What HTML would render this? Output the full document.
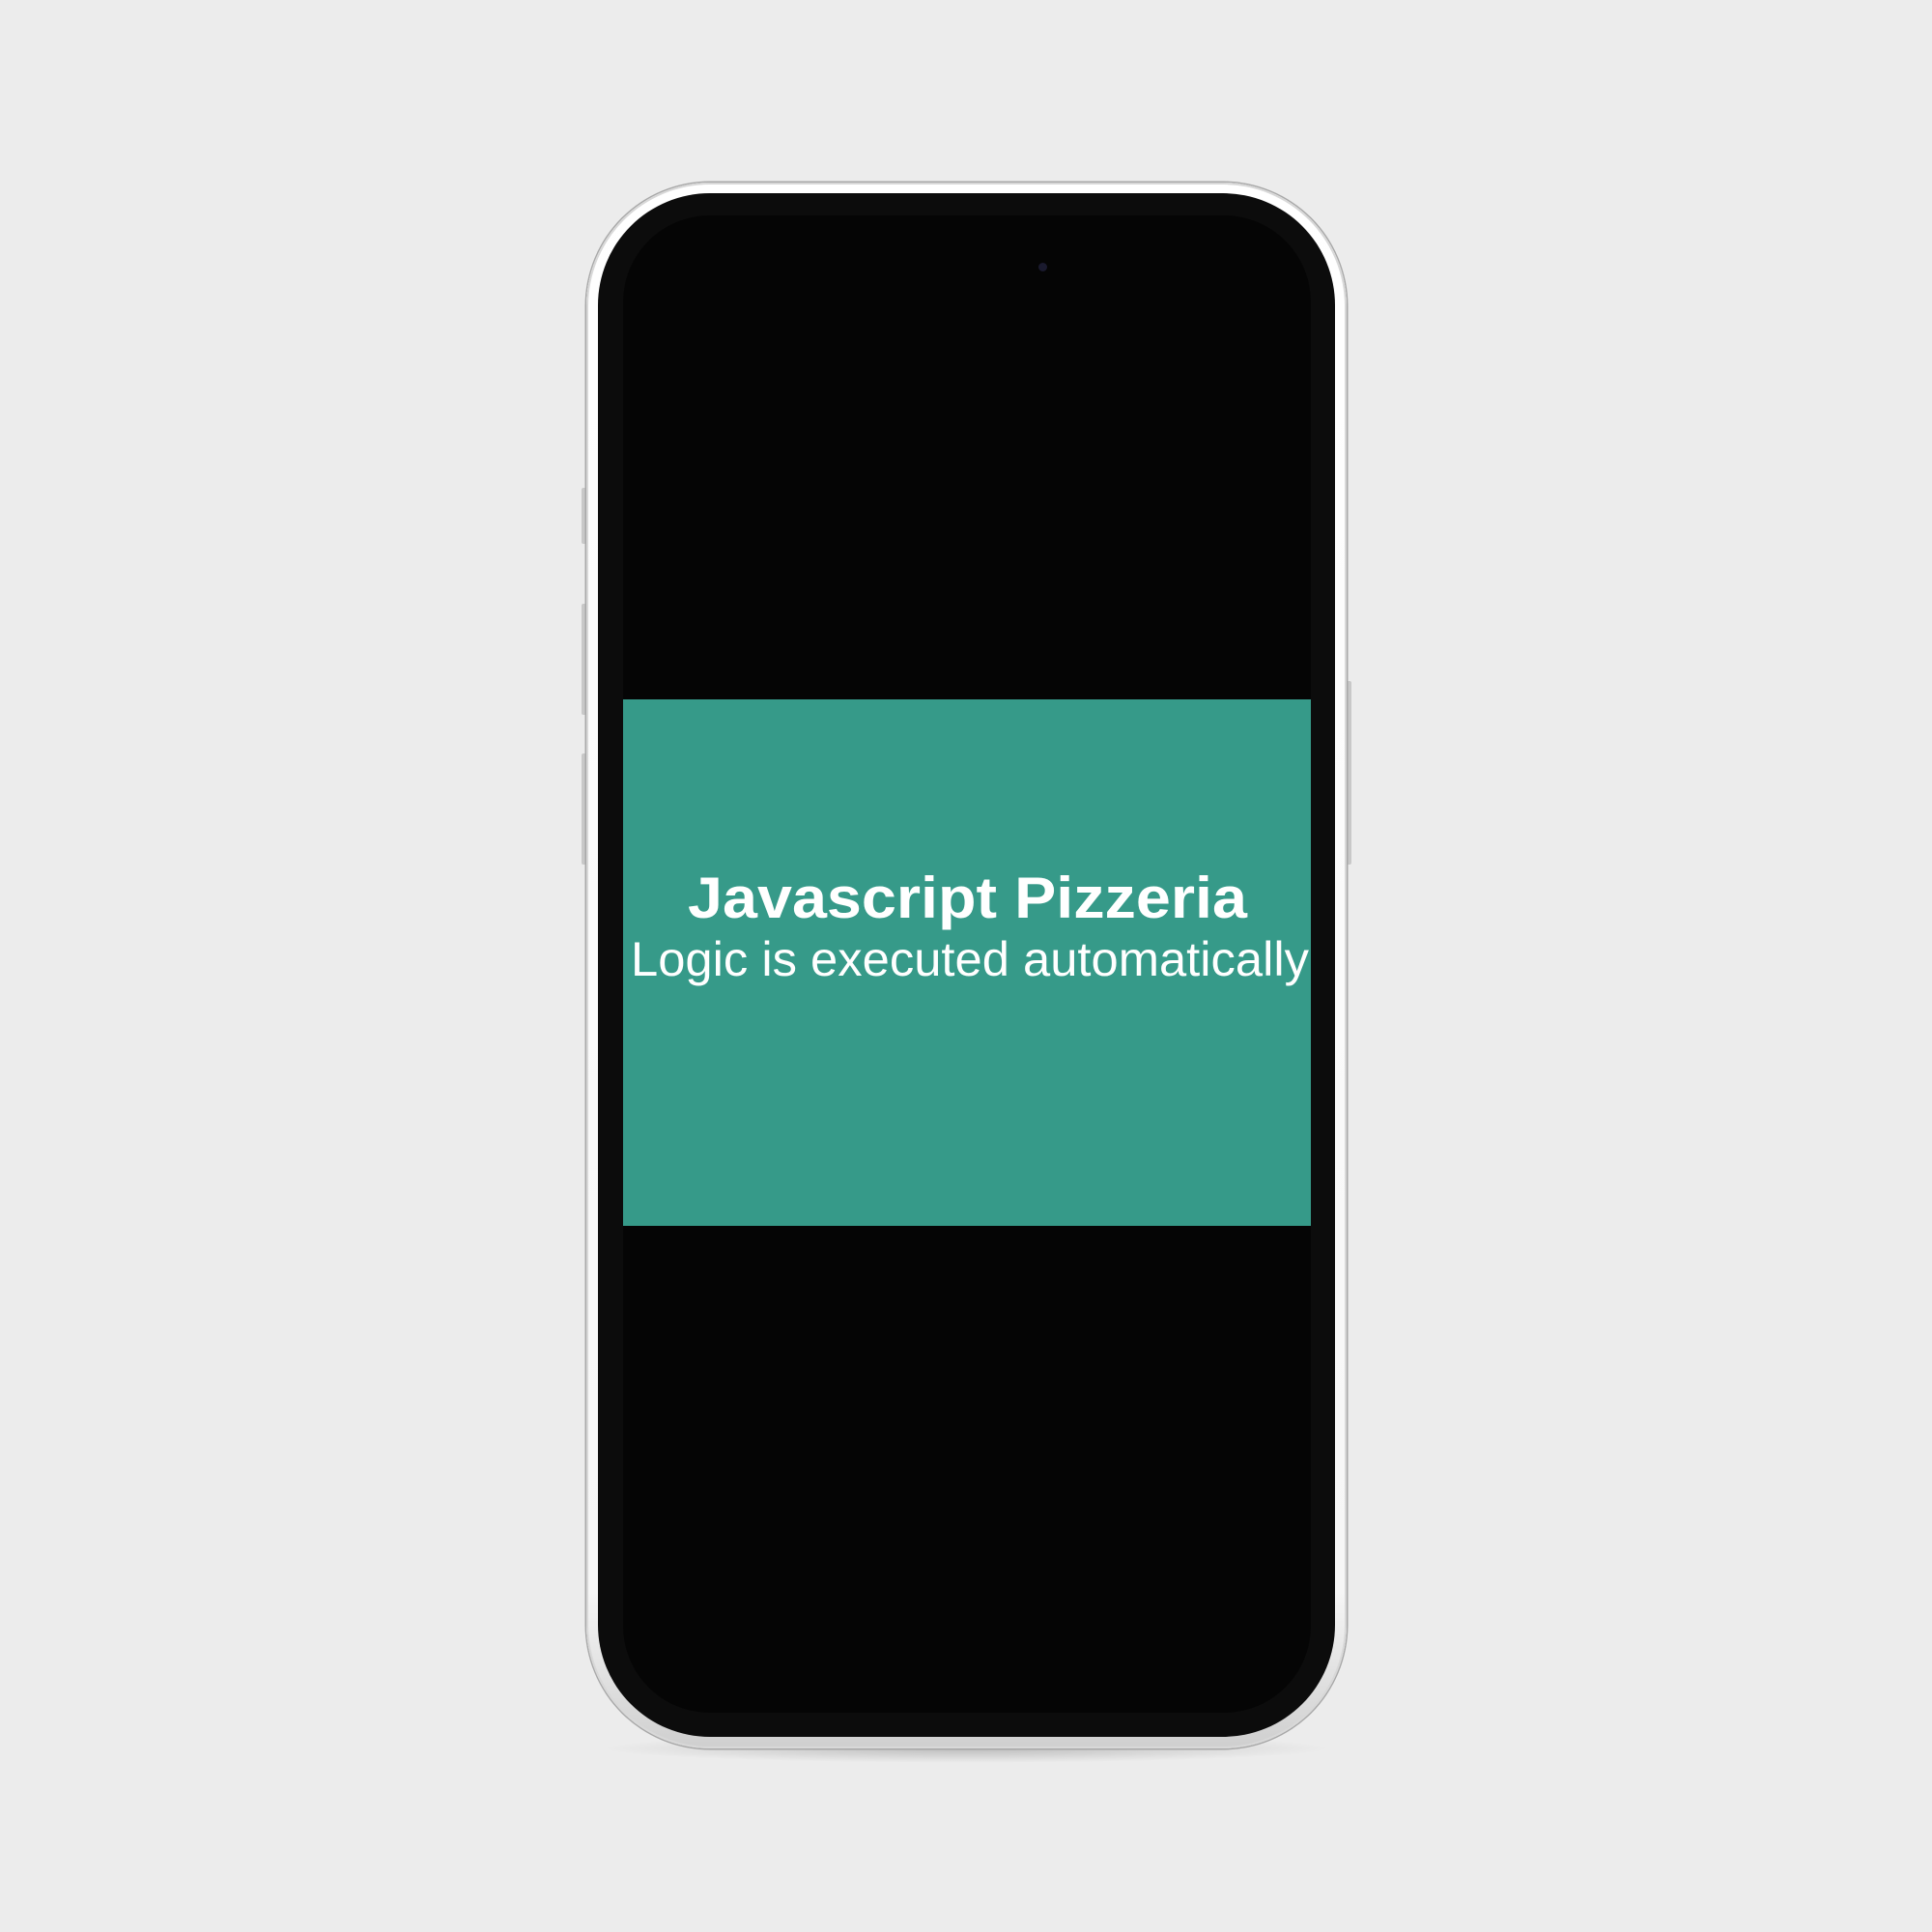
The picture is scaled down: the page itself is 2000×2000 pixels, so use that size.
<!DOCTYPE html>
<html><head><meta charset="utf-8"><style>
html,body{margin:0;padding:0;}
body{width:2000px;height:2000px;background:#ececec;position:relative;overflow:hidden;}
.shadow{position:absolute;left:620px;top:1795px;width:760px;height:30px;border-radius:50%;background:radial-gradient(ellipse at center,rgba(0,0,0,0.2),rgba(0,0,0,0) 70%);}
.frame{position:absolute;left:607px;top:189px;width:787px;height:1621px;border-radius:128px;background:linear-gradient(180deg,#fff 0%,#f6f6f6 90%,#cfcfcf 100%);box-shadow:0 0 0 1.5px #a8a8a8, inset 0 0 0 2px #d8d8d8;}
.bezel{position:absolute;left:619px;top:200px;width:763px;height:1598px;border-radius:116px;background:#0c0c0c;}
.screen{position:absolute;left:645px;top:223px;width:712px;height:1550px;border-radius:90px;background:#050505;overflow:hidden;}
.cam{position:absolute;left:1075px;top:272px;width:9px;height:9px;border-radius:50%;background:#1a1a2e;}
.teal{position:absolute;left:645px;top:724px;width:712px;height:545px;background:#369a89;}
.btn{position:absolute;background:#c8c8c8;border-radius:2px;}
svg{position:absolute;left:0;top:0;}
</style></head><body>
<div class="shadow"></div>
<div class="btn" style="left:602px;top:505px;width:6px;height:58px"></div>
<div class="btn" style="left:602px;top:625px;width:6px;height:115px"></div>
<div class="btn" style="left:602px;top:780px;width:6px;height:115px"></div>
<div class="btn" style="left:1393px;top:705px;width:6px;height:190px"></div>
<div class="frame"></div>
<div class="bezel"></div>
<div class="screen"></div>
<div class="cam"></div>
<div class="teal"></div>
<svg width="2000" height="2000">
<text x="712" y="950" font-family="Liberation Sans, sans-serif" font-weight="bold" font-size="60" fill="#fff" textLength="579" lengthAdjust="spacingAndGlyphs">Javascript Pizzeria</text>
<text x="653" y="1010" font-family="Liberation Sans, sans-serif" font-size="50" fill="#fff" textLength="702" lengthAdjust="spacingAndGlyphs">Logic is executed automatically</text>
</svg>
</body></html>
